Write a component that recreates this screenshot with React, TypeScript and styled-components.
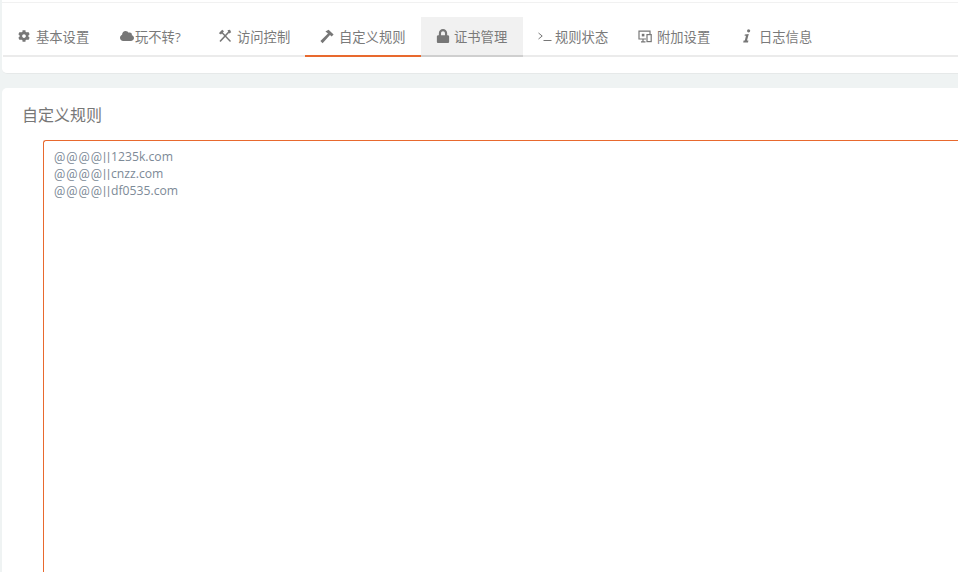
import React from "react";
import styled, { createGlobalStyle } from "styled-components";
import { FaCog, FaCloud, FaLock } from "react-icons/fa";

const Global = createGlobalStyle`
  html, body { margin: 0; padding: 0; height: 100%; overflow: hidden; background: #eff3f3; }
  body { font-family: "Open Sans", "Noto Sans CJK SC", sans-serif; }
`;
const Page = styled.div`
  width: 958px; height: 572px; overflow: hidden; box-sizing: border-box;
  padding-left: 2px; display: flex; flex-direction: column;
`;
const TopEdge = styled.div`
  flex: none; height: 3px; box-sizing: border-box; background: #fff; border-bottom: 1px solid #f1f1f1;
`;
const TabCard = styled.section`
  flex: none; height: 71px; box-sizing: border-box; padding-top: 14px; margin-bottom: 14px;
  background: #fff; border-bottom: 1px solid #e6e9e9;
  border-radius: 0 0 0 5px;
`;
const TabBar = styled.nav`
  display: flex; height: 40px; box-sizing: border-box; margin-left: 1px;
  border-bottom: 2px solid #ebebeb;
`;
const Tab = styled.div<{ $active?: boolean; $hover?: boolean; $width: number }>`
  flex: none; width: ${p => p.$width}px; height: 40px; box-sizing: border-box; padding: 0 0 0 15px;
  display: flex; align-items: center; font-size: 13.3px; color: #7a7a7a; white-space: nowrap;
  background: ${p => (p.$hover ? "#f1f1f1" : "transparent")};
  border-bottom: 2px solid ${p => (p.$active ? "#e8692e" : p.$hover ? "#cfcfcf" : "transparent")};
`;
const IconSlot = styled.span<{ $width: number }>`
  flex: none; width: ${p => p.$width}px; display: flex; align-items: center; color: #777;
`;
const EditorCard = styled.section`
  flex: 1; min-height: 0; background: #fff; border-radius: 5px 0 0 0;
  box-sizing: border-box; padding: 16px 0 0 20px;
`;
const Heading = styled.h2`
  margin: 0; font-size: 16px; font-weight: 400; line-height: 22px; color: #777;
`;
const Editor = styled.div`
  margin: 14px 0 0 21px; height: 600px; box-sizing: border-box;
  border: 1px solid #e8692e; border-right: none; border-radius: 3px 0 0 0;
  padding: 7px 10px; font-size: 12.2px; color: #7d8a97;
`;
const Line = styled.div`
  display: flex; align-items: center; height: 17px; line-height: 17px; white-space: nowrap;
`;
const Prefix = styled.span`
  font-family: "Roboto", sans-serif; font-size: 12.5px; letter-spacing: 1px;
`;

const Tools = () => (
  <svg width="14" height="14" viewBox="0 0 14 14" fill="none" stroke="#777" strokeWidth="1.4">
    <path d="M3 2.5 L12.5 12.5" />
    <path d="M11.5 2.2 L2 12.5" strokeWidth="1.6" />
    <path d="M0.8 4.2 L4.2 0.8 L6 2.2 L3 5.6 Z" fill="#777" stroke="none" />
    <path d="M9.5 1.2 L12 0.8 L13.2 3.2 L11.2 4.6 Z" fill="#777" stroke="none" />
  </svg>
);
const Hammer = () => (
  <svg width="14" height="15" viewBox="0 0 14 15" fill="#777">
    <path d="M5.4 2.6 L8.6 0.8 L13.6 5.6 L11.6 7.6 L10 6 L2.6 14.2 L0.4 12 L8 4.4 Z" />
  </svg>
);
const Prompt = () => (
  <svg width="14" height="12" viewBox="0 0 14 12" fill="none" stroke="#777" strokeWidth="1">
    <path d="M0.5 3 L4.2 6 L0.5 9" />
    <path d="M5.5 10.5 H13.5" />
  </svg>
);
const Screen = () => (
  <svg width="14" height="13" viewBox="0 0 14 13" fill="none" stroke="#777" strokeWidth="1.2">
    <path d="M8 9 H1 V1.2 H12 V4" />
    <path d="M3 11.8 H7.5 M5 9 V11.8" />
    <rect x="9" y="4.6" width="4.2" height="7" fill="#fff" />
    <rect x="3.8" y="3.8" width="2.6" height="2.6" fill="#777" stroke="none" />
  </svg>
);
const InfoGlyph = () => (
  <svg width="11" height="14" viewBox="0 0 11 14" fill="#777">
    <circle cx="7.6" cy="1.8" r="1.6" />
    <path d="M3.8 5.4 L7.8 5 L6 11.6 L7.4 11.6 L7 13.4 L2.2 13.4 L2.6 11.6 L3.8 11.6 L5 6.8 L3.6 6.8 Z" />
  </svg>
);

const tabs = [
  { label: "基本设置", width: 102, slot: 18, icon: <FaCog size={12} /> },
  { label: "玩不转?", width: 98, slot: 15, icon: <FaCloud size={14} /> },
  { label: "访问控制", width: 102, slot: 19, icon: <Tools /> },
  { label: "自定义规则", width: 116, slot: 19, icon: <Hammer />, active: true },
  { label: "证书管理", width: 102, slot: 18, icon: <FaLock size={14} />, hover: true },
  { label: "规则状态", width: 100, slot: 17, icon: <Prompt /> },
  { label: "附加设置", width: 103, slot: 19, icon: <Screen /> },
  { label: "日志信息", width: 100, slot: 18, icon: <InfoGlyph /> },
];

export default function App() {
  return (
    <Page>
      <Global />
      <TopEdge />
      <TabCard>
        <TabBar>
          {tabs.map(t => (
            <Tab key={t.label} $width={t.width} $active={t.active} $hover={t.hover}>
              <IconSlot $width={t.slot}>{t.icon}</IconSlot>
              {t.label}
            </Tab>
          ))}
        </TabBar>
      </TabCard>
      <EditorCard>
        <Heading>自定义规则</Heading>
        <Editor>
          <Line><Prefix>@@@@||</Prefix>1235k.com</Line>
          <Line><Prefix>@@@@||</Prefix>cnzz.com</Line>
          <Line><Prefix>@@@@||</Prefix>df0535.com</Line>
        </Editor>
      </EditorCard>
    </Page>
  );
}
